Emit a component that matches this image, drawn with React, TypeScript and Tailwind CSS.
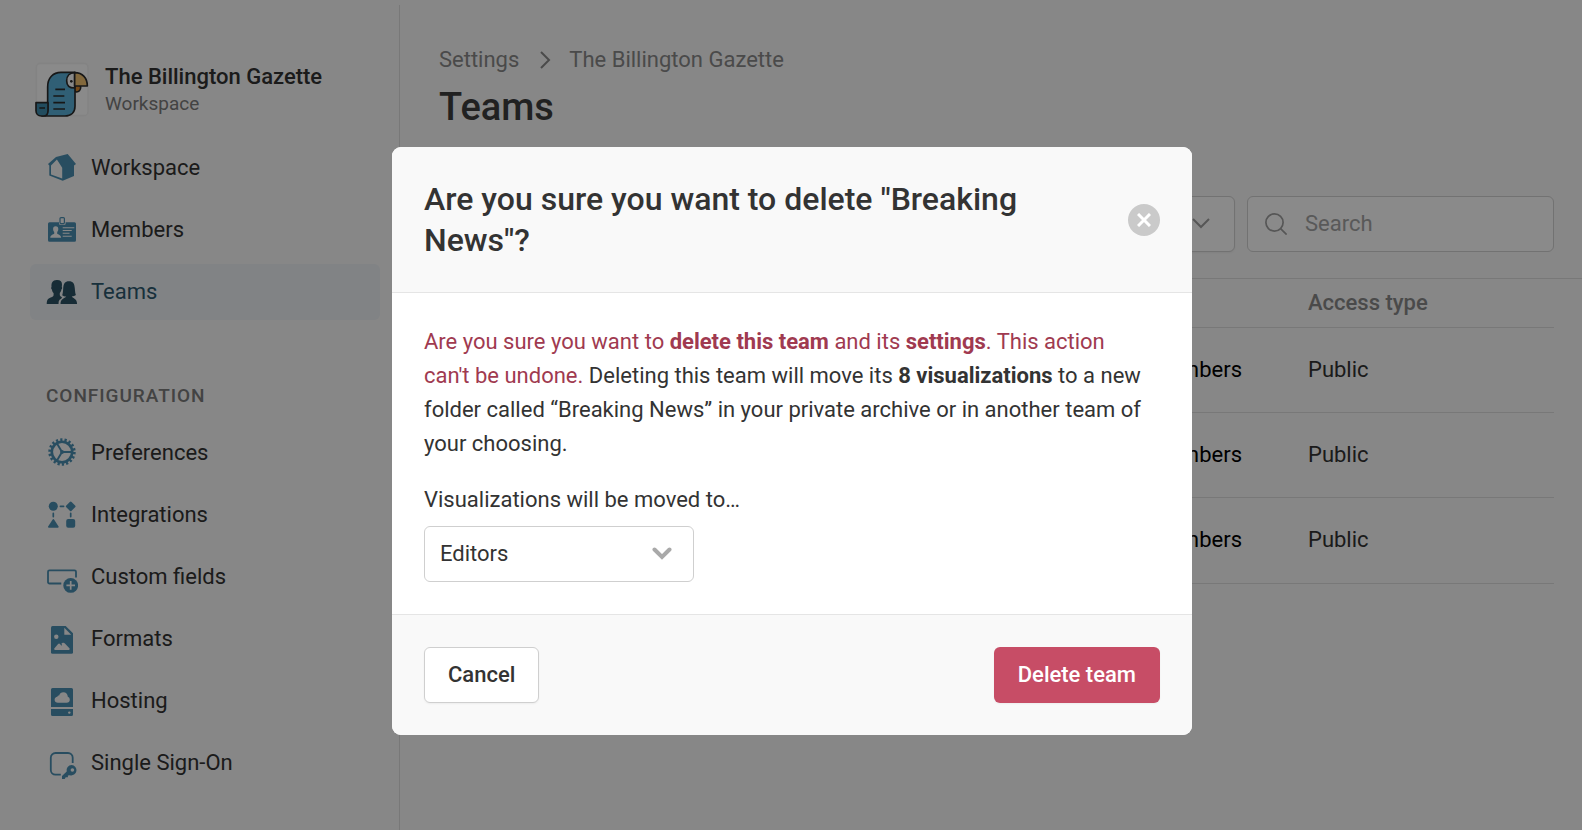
import { useState, type ReactNode } from "react";

type NavItem = { label: string; icon: ReactNode; active?: boolean };

function Icon({ children }: { children: ReactNode }) {
  return (
    <svg viewBox="0 0 32 32" aria-hidden="true" fill="currentColor" className="size-8 shrink-0">
      {children}
    </svg>
  );
}

const WORKSPACE_NAV: NavItem[] = [
  {
    label: "Workspace",
    icon: (
      <Icon>
        <path
          fillRule="evenodd"
          d="M2 12 10 5 21.7 2 30 12 28 13.6V24L16.7 28.7 3.3 23.4V13.6ZM5 13.4V22.4L16.2 26.6V15.7L10.9 7.6Z"
        />
      </Icon>
    ),
  },
  {
    label: "Members",
    icon: (
      <Icon>
        <path d="M3.5 8.2H13v1.6a1 1 0 0 0 1 1h4.6a1 1 0 0 0 1-1V8.2h8.9A1.5 1.5 0 0 1 30 9.7v16.5a1.5 1.5 0 0 1-1.5 1.5h-25A1.5 1.5 0 0 1 2 26.2V9.7a1.5 1.5 0 0 1 1.5-1.5Z" />
        <rect x="14" y="3.6" width="4.4" height="6" rx="1" fill="#f9f9f9" stroke="currentColor" strokeWidth="1.2" />
        <path
          d="M9.7 12.2c1.9 0 2.7 1.3 2.6 3-.1 1.4-.6 2.2-1.1 2.9v1.7c.8.8 3.9 1.1 3.9 3.9H4.3c0-2.8 3.1-3.1 3.9-3.9v-1.7c-.5-.7-1-1.5-1.1-2.9-.1-1.7.7-3 2.6-3Z"
          fill="#f9f9f9"
        />
        <path d="M16.7 13.7H28.3M16.7 16.5H25.7M16.7 19.3H23.5M16.7 22.2H25.7" stroke="#f9f9f9" strokeWidth="1.1" />
      </Icon>
    ),
  },
  {
    label: "Teams",
    active: true,
    icon: (
      <Icon>
        <path d="M10.7 4c3.7-.2 5.5 1.8 5.3 4.8l-.2 2.2c.6.3.4 2-.4 2.4-.3 1.7-.8 2.7-1.6 3.5v2.2c.2 1 .9 1.5 2.2 2.1l-.6 1.2c-1.4.8-2.4 1.7-2.7 3.2l-.2 2.4H.7c0-3.3.7-4.9 2.5-5.8 2-1 4.2-1.6 4.4-3v-2.2c-.9-.8-1.4-1.9-1.7-3.6-.8-.4-1-2.2-.4-2.5-.3-4.3 1-6.700 5.200-6.900Z" />
        <path d="M23 5.2c4.1 0 5.5 2.6 5.8 7.1.2 3 .5 5.3 1.1 6.8-1 .9-2.5 1.4-4.1 1.4.4 1.6 5.3 1.6 5.3 7.5H14.5c0-5.9 5.1-5.9 5.7-7.5-1.6 0-3-.4-4-1.2.6-1.6.8-3.9 1-7 .3-4.5 1.7-7.1 5.8-7.1Z" />
      </Icon>
    ),
  },
];

const CONFIG_NAV: NavItem[] = [
  {
    label: "Preferences",
    icon: (
      <Icon>
        <g fill="none" stroke="currentColor">
          <circle cx="16" cy="15" r="10.2" strokeWidth="2.6" />
          <circle cx="16" cy="15" r="12.3" strokeWidth="2.8" strokeDasharray="2.2 2.093" />
          <path d="M16 15H26M16 15 11 6.4M16 15 11 23.6" strokeWidth="1.9" />
        </g>
        <circle cx="16" cy="15" r="1.9" />
      </Icon>
    ),
  },
  {
    label: "Integrations",
    icon: (
      <Icon>
        <circle cx="7.3" cy="7.3" r="4.5" />
        <path d="M23.8 2.9a1.2 1.2 0 0 1 1.8 0l3.5 3.5a1.2 1.2 0 0 1 0 1.8l-3.5 3.5a1.2 1.2 0 0 1-1.8 0l-3.5-3.5a1.2 1.2 0 0 1 0-1.8Z" />
        <path d="M6.5 20.800a1 1 0 0 1 1.700 0l4.400 6.700a.8.8 0 0 1-.7 1.200H2.800a.8.8 0 0 1-.7-1.200Z" />
        <rect x="20.2" y="20" width="9" height="8.8" rx="2" />
        <path d="M14.4 7.3h3.2M7.3 14.4v3.2M24.7 14.4v3.2" stroke="currentColor" strokeWidth="1.7" strokeLinecap="round" />
      </Icon>
    ),
  },
  {
    label: "Custom fields",
    icon: (
      <Icon>
        <path
          d="M15.3 22.5H3.5A1.5 1.5 0 0 1 2 21V10.8a1.5 1.5 0 0 1 1.5-1.5h25a1.5 1.5 0 0 1 1.5 1.5V16.5"
          fill="none"
          stroke="currentColor"
          strokeWidth="1.8"
        />
        <circle cx="24.7" cy="24.4" r="7.4" />
        <path d="M20.4 24.4h8.6M24.7 20.1v8.6" stroke="#f9f9f9" strokeWidth="1.7" />
      </Icon>
    ),
  },
  {
    label: "Formats",
    icon: (
      <Icon>
        <path d="M6.5 3H19.7L27 10.3V29.2A1.5 1.5 0 0 1 25.5 30.7H6.5A1.5 1.5 0 0 1 5 29.2V4.5A1.5 1.5 0 0 1 6.5 3Z" />
        <path d="M18.3 4.8V11.7H25.2Z" fill="#f9f9f9" />
        <circle cx="10.3" cy="13.8" r="2.2" fill="#f9f9f9" />
        <path
          d="M8.3 25.4l3.8-4.3c.6-.7 1.3-.7 1.9 0l1 1.200c.6.600 1.200.2 1-.5l-.7-1 1-.7c.8-.6 1.900-.5 2.600.3l4.500 4.800c.6.7.3 1.700-.6 1.700H9.300c-.9 0-1.500-.8-1-1.500Z"
          fill="#f9f9f9"
        />
      </Icon>
    ),
  },
  {
    label: "Hosting",
    icon: (
      <Icon>
        <path d="M6.5 3h19A1.5 1.5 0 0 1 27 4.5V22H5V4.5A1.5 1.5 0 0 1 6.5 3ZM5 24H27v5.5a1.5 1.5 0 0 1-1.5 1.5h-19A1.5 1.5 0 0 1 5 29.5Z" />
        <path
          d="M12 17.8c-2 0-3.4-1.2-3.4-3s1.2-2.7 2.7-3c.2-.8.9-1.3 1.8-1.3.8-2.2 2.2-3.3 4.2-3.3 2.7 0 4.4 1.8 4.5 4.6 1.2.3 2 1.5 2 2.9 0 1.8-1.3 3.1-3.1 3.1Z"
          fill="#f9f9f9"
        />
        <circle cx="23.3" cy="27.6" r="1.2" fill="#f9f9f9" />
      </Icon>
    ),
  },
  {
    label: "Single Sign-On",
    icon: (
      <Icon>
        <path
          d="M14.8 27.7H9.5A4.7 4.7 0 0 1 4.8 23V10.7A4.7 4.7 0 0 1 9.5 6H22A4.7 4.7 0 0 1 26.7 10.7V16"
          fill="none"
          stroke="currentColor"
          strokeWidth="1.8"
        />
        <path
          fillRule="evenodd"
          d="M25.6 18a5.2 5.2 0 1 1-1.7 10.2l-2 .3v1.8h-2.2l-1 1.7H16v-3l4.7-4.6A5.2 5.2 0 0 1 25.6 18Zm.8 3.2a1.8 1.8 0 1 0 0 3.6 1.8 1.8 0 0 0 0-3.6Z"
        />
      </Icon>
    ),
  },
];

const TEAMS = [
  { id: 1, members: "4 members", access: "Public" },
  { id: 2, members: "6 members", access: "Public" },
  { id: 3, members: "3 members", access: "Public" },
];

function ParrotLogo() {
  return (
    <svg viewBox="15 18 165 165" aria-hidden="true" className="size-[55px] shrink-0">
      <rect x="19" y="22" width="155" height="157" rx="12" fill="#fff" stroke="#f3f3f3" strokeWidth="5" />
      <g stroke="#2b2b2b" strokeWidth="5" strokeLinejoin="round">
        <path d="M134 80c10 0 18 4 18 14 0 9-6 14-12 14-5 0-8-3-8-8Z" fill="#d8852c" />
        <path d="M53 92c0-26 16-43 40-43h42v102c0 18-12 29-30 29H36c12 0 17-9 17-20Z" fill="#59b0d8" />
        <path d="M18 140H54v24c0 10-6 16-14 16H34c-10 0-16-7-16-16Z" fill="#3f8cae" />
        <path d="M134 50c-16 0-24 11-24 24s8 22 24 22Z" fill="#fff" />
        <path d="M134 50c24 0 38 16 38 40H134Z" fill="#f0c070" />
      </g>
      <circle cx="124" cy="76" r="4" fill="#2b2b2b" />
      <path d="M76 100H105M70 120H103M70 140H105M70 159H105M28 156H45" stroke="#2b2b2b" strokeWidth="5" />
    </svg>
  );
}

function NavList({ items }: { items: NavItem[] }) {
  return (
    <ul className="flex flex-col gap-1.5">
      {items.map((item) => (
        <li key={item.label}>
          <a
            href="#"
            aria-current={item.active ? "page" : undefined}
            className={`flex h-14 items-center gap-[13px] rounded-md px-4 ${
              item.active ? "bg-[#eef2f5] text-[#2e5a70]" : "text-[#333]"
            }`}
          >
            <span className={item.active ? "text-[#2c5264]" : "text-[#4b8fb2]"}>{item.icon}</span>
            {item.label}
          </a>
        </li>
      ))}
    </ul>
  );
}

function Sidebar() {
  return (
    <aside className="mt-[5px] w-[400px] shrink-0 border-r border-[#dedede] pl-[30px] pr-[19px] pt-14">
      <div className="flex items-center gap-[15px] pl-[5px]">
        <ParrotLogo />
        <div className="pt-0.5">
          <p className="font-medium leading-7">The Billington Gazette</p>
          <p className="text-[19px] leading-[26px] text-[#7c7c7c]">Workspace</p>
        </div>
      </div>
      <nav aria-label="Workspace" className="mt-[23px]">
        <NavList items={WORKSPACE_NAV} />
      </nav>
      <nav aria-label="Configuration" className="mt-[62px]">
        <h2 className="mb-[15px] pl-4 text-[19px] font-medium uppercase leading-7 tracking-wider text-[#7c7c7c]">
          Configuration
        </h2>
        <NavList items={CONFIG_NAV} />
      </nav>
    </aside>
  );
}

function TeamsPage() {
  return (
    <main className="flex-1 pt-[43px]">
      <div className="pl-[39px] pr-7">
        <nav aria-label="Breadcrumb" className="flex items-center text-[#8a8a8a]">
          <a href="#">Settings</a>
          <svg viewBox="0 0 12 20" aria-hidden="true" className="ml-5 mr-[18px] h-5 w-3" fill="none" stroke="currentColor" strokeWidth="2">
            <path d="m2 2 8 8-8 8" />
          </svg>
          <a href="#">The Billington Gazette</a>
        </nav>
        <h1 className="mt-1 text-[38px] font-medium leading-[52px] text-[#3d3d3d]">Teams</h1>
        <div className="mt-[63px] flex justify-end gap-3">
          <button
            type="button"
            aria-label="Sort teams"
            className="flex h-14 w-40 items-center justify-end rounded-md border border-[#d2d2d2] bg-white pr-6 text-[#a0a0a0] shadow-xs"
          >
            <svg viewBox="0 0 18 12" aria-hidden="true" className="h-3 w-[18px]" fill="none" stroke="currentColor" strokeWidth="2">
              <path d="m1 1 8 8 8-8" />
            </svg>
          </button>
          <label className="flex h-14 w-[307px] items-center gap-[18px] rounded-md border border-[#d2d2d2] bg-white pl-[17px] text-[#a0a0a0]">
            <svg viewBox="0 0 22 22" aria-hidden="true" className="size-[22px] shrink-0" fill="none" stroke="currentColor" strokeWidth="1.7">
              <circle cx="9.5" cy="9.5" r="8.6" />
              <path d="m15.6 15.6 6 6" />
            </svg>
            <input
              type="search"
              aria-label="Search"
              placeholder="Search"
              className="w-full min-w-0 bg-transparent outline-none placeholder:text-[#a5a5a5]"
            />
          </label>
        </div>
      </div>
      <div className="mt-[26px] border-t border-[#dedede] pl-[39px] pr-7">
        <table className="w-full table-fixed border-collapse text-left">
          <thead>
            <tr className="h-12 border-b border-[#dedede] text-[#8a8a8a]">
              <th aria-label="Members" />
              <th className="w-[246px] font-medium">Access type</th>
            </tr>
          </thead>
          <tbody>
            {TEAMS.map((team) => (
              <tr key={team.id} className="h-[85px] border-b border-[#dedede] last:h-[86px]">
                <td className="pr-[66px] text-right text-black">{team.members}</td>
                <td>{team.access}</td>
              </tr>
            ))}
          </tbody>
        </table>
      </div>
    </main>
  );
}

function DeleteTeamDialog({ onClose }: { onClose: () => void }) {
  const [target, setTarget] = useState("Editors");

  return (
    <div className="fixed inset-0 z-50 flex items-center justify-center bg-black/46 pl-0.5 pt-[52px]">
      <div
        role="dialog"
        aria-modal="true"
        aria-labelledby="delete-title"
        className="w-full max-w-[800px] overflow-hidden rounded-[9px] bg-white"
      >
        <header className="flex items-center justify-between gap-16 border-b border-[#e5e5e5] bg-[#f9f9f9] px-8 pb-[31px] pt-8">
          <h2 id="delete-title" className="text-[32px] font-medium leading-[41px]">
            Are you sure you want to delete "Breaking News"?
          </h2>
          <button
            type="button"
            aria-label="Close"
            onClick={onClose}
            className="flex size-8 shrink-0 items-center justify-center rounded-full bg-[#cacaca] text-white"
          >
            <svg viewBox="0 0 14 14" aria-hidden="true" className="size-3.5" stroke="currentColor" strokeWidth="3">
              <path d="m1 1 12 12M13 1 1 13" />
            </svg>
          </button>
        </header>

        <div className="px-8 py-8">
          <p className="pr-2 leading-[34px]">
            <span className="text-[#a03a50]">
              Are you sure you want to <strong>delete this team</strong> and its <strong>settings</strong>. This action
              can't be undone.
            </span>{" "}
            Deleting this team will move its <strong>8 visualizations</strong> to a new folder called “Breaking News” in
            your private archive or in another team of your choosing.
          </p>
          <label htmlFor="target-team" className="mt-[22px] block leading-[34px]">
            Visualizations will be moved to…
          </label>
          <div className="relative mt-[9px] w-[270px]">
            <select
              id="target-team"
              value={target}
              onChange={(e) => setTarget(e.target.value)}
              className="h-14 w-full appearance-none rounded-md border border-[#cfcfcf] bg-white px-[15px] outline-none"
            >
              <option>Editors</option>
            </select>
            <svg
              viewBox="0 0 20 14"
              aria-hidden="true"
              className="pointer-events-none absolute right-[22px] top-[21px] h-3.5 w-5"
              fill="none"
              stroke="#a9a9a9"
              strokeWidth="4"
            >
              <path d="m2.5 2.5 7.5 7.5 7.5-7.5" strokeLinecap="round" />
            </svg>
          </div>
        </div>

        <footer className="flex justify-between border-t border-[#e5e5e5] bg-[#f9f9f9] px-8 py-8">
          <button
            type="button"
            onClick={onClose}
            className="h-14 rounded-md border border-[#cfcfcf] bg-white px-[23px] font-medium shadow-xs"
          >
            Cancel
          </button>
          <button type="button" className="h-14 rounded-md bg-[#c74d66] px-6 font-medium text-white shadow-xs">
            Delete team
          </button>
        </footer>
      </div>
    </div>
  );
}

export default function App() {
  const [confirming, setConfirming] = useState(true);

  return (
    <div className="flex min-h-screen bg-[#f9f9f9] font-[Roboto,sans-serif] text-[22px] leading-[34px] text-[#333]">
      <Sidebar />
      <TeamsPage />
      {confirming && <DeleteTeamDialog onClose={() => setConfirming(false)} />}
    </div>
  );
}
